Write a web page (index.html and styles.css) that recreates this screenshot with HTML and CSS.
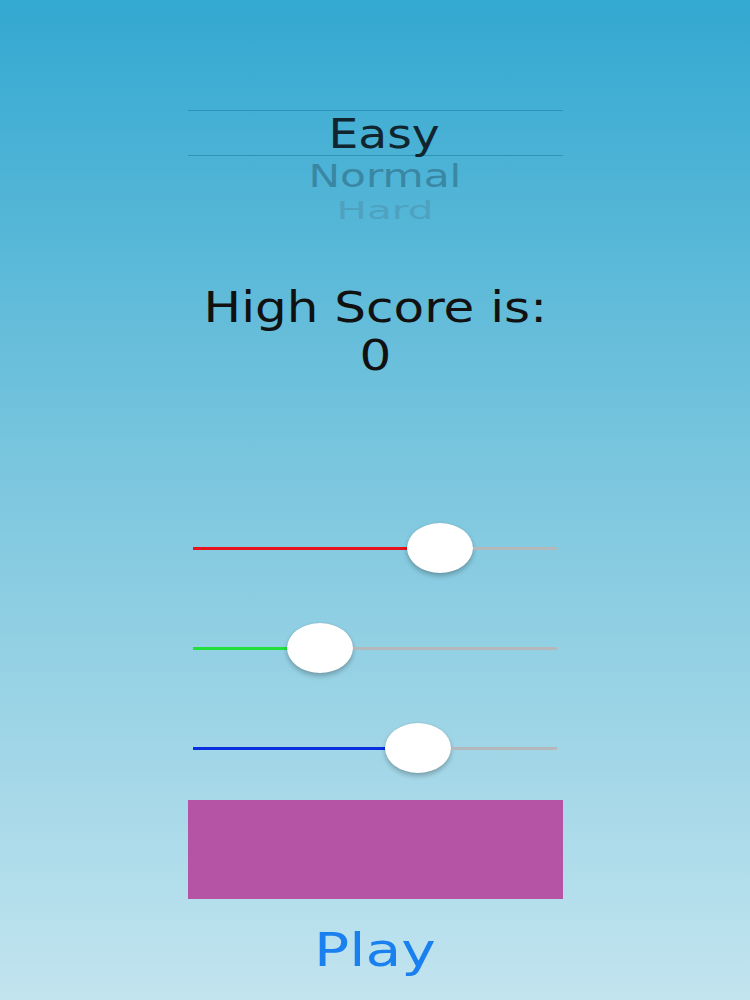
FILE: index.html
```html
<!DOCTYPE html>
<html>
<head>
<meta charset="utf-8">
<link rel="stylesheet" href="styles.css">
</head>
<body>
<div class="screen">
  <div class="picker">
    <div class="row selected"><span class="t easy">Easy</span></div>
    <div class="row normal"><span class="t">Normal</span></div>
    <div class="row hard"><span class="t">Hard</span></div>
  </div>
  <div class="score">
    <div class="line"><span class="t">High Score is:</span></div>
    <div class="line"><span class="t">0</span></div>
  </div>
  <div class="sliders">
    <div class="slider red"><div class="fill" style="width:214px"></div><div class="thumb"></div><div class="rest"></div></div>
    <div class="slider green"><div class="fill" style="width:94px"></div><div class="thumb"></div><div class="rest"></div></div>
    <div class="slider blue"><div class="fill" style="width:192px"></div><div class="thumb"></div><div class="rest"></div></div>
  </div>
  <div class="swatch"></div>
  <div class="play"><span class="t">Play</span></div>
</div>
</body>
</html>
```
FILE: styles.css
```css
html, body {
  margin: 0;
  padding: 0;
}
body {
  font-family: "DejaVu Sans", "Liberation Sans", sans-serif;
}
.screen {
  width: 750px;
  height: 1000px;
  background: linear-gradient(to bottom, #33a8d1 0%, #7fc8df 50%, #c2e4ef 100%);
  display: flex;
  flex-direction: column;
  align-items: center;
  padding-top: 110px;
  box-sizing: border-box;
  overflow: hidden;
}
.t {
  display: inline-block;
  white-space: nowrap;
}
.picker {
  width: 375px;
  display: flex;
  flex-direction: column;
  align-items: center;
}
.row {
  width: 100%;
  box-sizing: border-box;
  padding-left: 19px;
  display: flex;
  justify-content: center;
}
.selected {
  height: 46px;
  border-top: 1px solid #2e93b8;
  border-bottom: 1px solid #2e93b8;
  align-items: center;
  font-size: 40px;
  color: #10252d;
}
.selected .t {
  transform: scaleX(1.18);
  line-height: 44px;
  margin-top: 2px;
}
.normal {
  height: 38px;
  align-items: center;
  font-size: 32px;
  color: #3a87a3;
}
.normal .t {
  transform: scaleX(1.32);
  line-height: 38px;
  margin-top: 2px;
}
.hard {
  height: 28px;
  align-items: flex-start;
  font-size: 30px;
  color: #4f9fbb;
  opacity: 0.85;
  overflow: hidden;
}
.hard .t {
  line-height: 34px;
  transform: scaleX(1.35) scaleY(0.85);
  transform-origin: center top;
  margin-top: 2px;
}
.score {
  margin-top: 62px;
  display: flex;
  flex-direction: column;
  align-items: center;
  font-size: 42px;
  color: #111;
}
.score .line {
  height: 48px;
  line-height: 48px;
}
.score .t {
  transform: scaleX(1.19);
}
.sliders {
  margin-top: 143px;
  width: 364px;
  display: flex;
  flex-direction: column;
  gap: 50px;
}
.slider {
  height: 50px;
  display: flex;
  align-items: center;
}
.fill {
  height: 3px;
}
.red .fill { background: #e8141c; }
.green .fill { background: #22e03a; }
.blue .fill { background: #0a2fe0; }
.rest {
  flex: 1;
  height: 3px;
  background: #b5b8bb;
}
.thumb {
  width: 66px;
  height: 50px;
  border-radius: 50%;
  background: #fff;
  box-shadow: 0 3px 5px rgba(0, 0, 0, 0.25), 0 0 1px rgba(0, 0, 0, 0.2);
  flex: none;
}
.swatch {
  margin-top: 27px;
  width: 375px;
  height: 99px;
  background: #b553a5;
}
.play {
  margin-top: 26px;
  font-size: 46px;
  color: #1a80ef;
  line-height: 50px;
}
.play .t {
  transform: scaleX(1.27);
}
```
